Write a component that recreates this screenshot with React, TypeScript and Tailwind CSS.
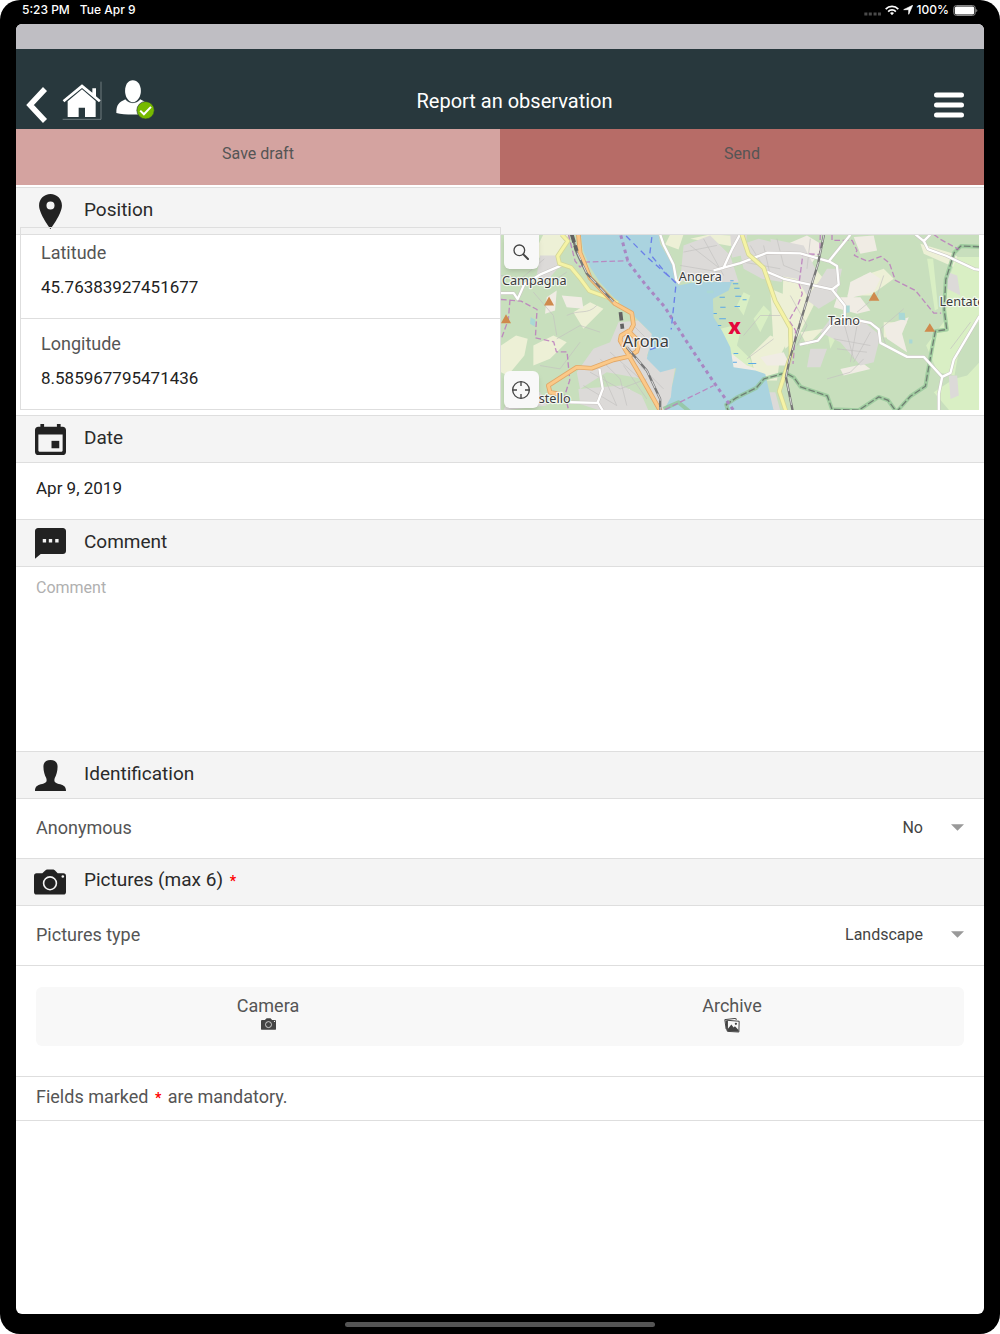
import { useState } from 'react';
import type { ReactNode } from 'react';

const ACCENT_ICON = '#222222';

const BackIcon = () => (
    <svg viewBox="0 0 22 38" className="w-[22px] h-[38px]" fill="none" stroke="#fff" strokeWidth="5.5">
        <path d="M19 3 4 19l15 16" strokeLinejoin="miter" />
    </svg>
);

const HomeIcon = () => (
    <svg viewBox="0 0 120 120" className="w-10 h-10">
        <path d="M117 2v113H2" fill="none" stroke="#7d898c" strokeWidth="2.5" />
        <path d="M60 10 2 58l5 6 53-43 51 43 5-6-14-12V22H91v13z" fill="#fff" />
        <path d="M60 25 17 61v47h33V80h19v28h32V60z" fill="#fff" />
    </svg>
);

const UserIcon = () => (
    <svg viewBox="0 0 116 116" className="w-[39px] h-[39px]">
        <path d="M50 1c14 0 24 14 24 31S64 66 50 66 27 49 27 32 36 1 50 1z" fill="#fff" />
        <path d="M1 98C1 72 8 67 28 57c12 14 32 14 44 0 20 10 27 14 27 41-25 6-73 6-98 0z" fill="#fff" />
        <path d="M28 57c12 14 32 14 44 0" fill="none" stroke="#28383d" strokeWidth="1.5" />
        <circle cx="88" cy="90" r="26" fill="#76b900" stroke="#28383d" strokeWidth="2" />
        <path d="m72 91 11 11 21-22" fill="none" stroke="#fff" strokeWidth="6" />
    </svg>
);

const MenuIcon = () => (
    <svg viewBox="0 0 30 26" className="w-[30px] h-[26px]" stroke="#fff" strokeWidth="5" strokeLinecap="round">
        <path d="M2.5 3h25M2.5 13h25M2.5 23h25" />
    </svg>
);

const PinIcon = () => (
    <svg viewBox="0 0 68 104" className="w-[23px] h-[35px]">
        <path
            d="M34 0C15 0 0 15 0 34c0 25 34 70 34 70s34-45 34-70C68 15 53 0 34 0zm0 46a12 12 0 1 1 0-24 12 12 0 0 1 0 24z"
            fill={ACCENT_ICON}
        />
    </svg>
);

const CalendarIcon = () => (
    <svg viewBox="0 0 92 92" className="w-[31px] h-[31px]" fill={ACCENT_ICON}>
        <path d="M10 8h6V0h11v8h38V0h11v8h6c6 0 10 4 10 10v64c0 6-4 10-10 10H10C4 92 0 88 0 82V18C0 12 4 8 10 8zm0 23v48c0 2 1 3 3 3h66c2 0 3-1 3-3V31z" fillRule="evenodd" />
        <path d="M49 50h23v22H49z" />
    </svg>
);

const CommentIcon = () => (
    <svg viewBox="0 0 92 92" className="w-[31px] h-[31px]">
        <path d="M9 0h74c5 0 9 4 9 9v59c0 5-4 9-9 9H17L0 91V9c0-5 4-9 9-9z" fill={ACCENT_ICON} />
        <path d="M23 33h10v10H23zM41 33h10v10H41zM60 33h10v10H60z" fill="#f4f4f4" />
    </svg>
);

const PersonIcon = () => (
    <svg viewBox="0 0 92 92" className="w-[31px] h-[31px]">
        <path
            d="M46 0c14 0 21 8 21 20 0 14-4 25-8 33-2 5-2 9 0 12 3 4 10 5 16 7 12 4 17 8 17 20H0c0-12 5-16 17-20 6-2 13-3 16-7 2-3 2-7 0-12-4-8-8-19-8-33C25 8 32 0 46 0z"
            fill={ACCENT_ICON}
        />
    </svg>
);

const CameraIcon = ({ className, color = ACCENT_ICON }: { className: string; color?: string }) => (
    <svg viewBox="0 0 100 78" className={className}>
        <path d="M8 12h18L36 2c2-1 3-2 6-2h17c3 0 4 1 6 2l9 10h18c5 0 8 3 8 8v50c0 5-3 8-8 8H8c-5 0-8-3-8-8V20c0-5 3-8 8-8z" fill={color} />
        <circle cx="50" cy="43" r="20" fill="none" stroke="#f6f6f6" strokeWidth="5" />
        <circle cx="90" cy="22" r="4" fill="#f6f6f6" />
    </svg>
);

const PhotosIcon = () => (
    <svg viewBox="0 0 48 46" className="w-4 h-[15px]">
        <path d="M6 34 2 5l34-4 1 5" fill="none" stroke="#444" strokeWidth="3" />
        <path d="M4 8l6-1v32l-3-1z" fill="#444" />
        <path d="M10 7l36 3-1 33-35-2z" fill="#f8f8f8" stroke="#444" strokeWidth="3" />
        <path d="M11 40V34l11-14 7 9 4-4 11 12v5z" fill="#444" />
        <circle cx="36" cy="18" r="3.5" fill="#444" />
    </svg>
);

const SearchIcon = () => (
    <svg viewBox="0 0 48 48" className="w-4 h-4" fill="none" stroke="#444">
        <circle cx="19" cy="19" r="16" strokeWidth="4" />
        <path d="m31 31 14 14" strokeWidth="6" strokeLinecap="round" />
    </svg>
);

const LocateIcon = () => (
    <svg viewBox="0 0 54 54" className="w-[18px] h-[18px]" fill="none" stroke="#444" strokeWidth="4">
        <circle cx="27" cy="27" r="25" />
        <path d="M27 2v13M27 39v13M2 27h13M39 27h13" />
    </svg>
);

const MapDrawing = () => (
    <svg
        viewBox="33 27 1434 528"
        preserveAspectRatio="xMidYMid slice"
        className="block w-full h-full"
        role="img"
        aria-label="Map of Arona and Angera"
        fill="none"
        strokeLinejoin="round"
    >
        <path d="M33 27h1434v528H33z" fill="#c8dfbd" />

        {/* fields and open land */}
        <g fill="#edf0d6">
            <path d="M160 27h75l-20 55-40 30-45-25zM33 360l45-30 35 10-10 50-50 60-20-10zM90 45l50-10 10 40-40 20zM130 360l60-30 40 20-50 50-50 20zM250 260l50-30 40 20-60 60z" />
            <path d="M540 27h40l-15 45-40-15zM840 190l50 20 20 60-20 80-40 10z" />
            <path d="M880 120l70-20 50 60-30 80-50 100-35 30-10-90zM1070 210l50-60 60-20 30 30-70 50zM1180 290l70 0-30 50-40-5zM1290 55l100 30 60 50-60-10-90-40z" />
            <path d="M780 390l60-60 50 20-20 40-10 75h-60zM600 40l60-13 90 5-30 30zM930 320l70-10-50 50z" />
        </g>
        <g fill="#d9efc4">
            <path d="M1400 95h67v190l-60 80-15 85-50-10-35-80 60-80-5-90zM1330 500l60-40 40-10 37-40v145h-90z" />
            <path d="M690 310l40-10 20 20-10 40 40 40 10 35-60-15-20-60zM1310 100l18 0 15 150-10 5z" />
            <path d="M740 240l20-40 20 10-20 60zM790 280l30-40 20 20-30 60zM1010 310l30 20-20 40z" />
        </g>
        <g fill="#f0ece4">
            <path d="M1080 170l60-30 30 20-20 40-80 20zM1040 215l70 0 30 40-40 10-70-20zM1180 300l75-25-20 50 15 55-60-40zM1050 430l70-15 20 15-80 20zM880 60l70-30 50 30-40 60-80-10zM1090 35l60-5 10 45-50 10z" />
            <path d="M170 215l30-20-5 60-30 10zM215 210l60 5 5 35-50-5zM330 490l90 0-10 65h-80zM810 395l70-15 20 40-70 0zM725 385l45 35 30 10-20 20-60-10z" />
        </g>

        {/* built-up areas */}
        <g fill="#dcdad8">
            <path d="M385 290l60-5 50 50-25 55 40 40 45-5-10 60 5 70h-45l-45-95-110-20-80 50-10-50 50-70 50-20z" />
            <path d="M265 490l130-10 60 30 20 45H330l-60-20zM150 90l50 0 10 30-50 60-20-30z" />
            <path d="M580 60l80-30 60 60 25 80-60 0-70-10-45 8zM720 27h50l-5 60-40 10zM745 60l60-20 80 20-10 110-60-10-55-30z" />
            <path d="M840 40l100 20 40 80-30 70-30-50-60-10zM1010 130l45 0-20 90-50 30-40-30 40-50zM1020 280l90 0 60 50-20 80-40 10-60-70-60-30zM960 370l50 0-20 55-40 0z" />
            <path d="M1370 140l30 10 10 60-40-20zM1375 450l25 0 5 60-25 10zM70 480l80 20 20 40-130 15zM830 500l25 0 15 55h-20z" />
        </g>
        <g stroke="#c3c1c0" strokeWidth="2">
            <path d="M300 440l90 50 80-30M330 400l60 60 20 80M400 420l70 100M430 300l60 60M340 450l40 90M280 480l100 60M360 380l90 80M450 420l70 70M600 60l90 70M570 120l120 20M640 40l60 110M580 80l100-20M760 110l110 20M780 60l50 80M820 60l20 90M1030 340l110 20M1060 290l30 110M1100 300l-20 110M1140 320l-50 90M1040 370l90 10" />
            <path d="M170 180l60-40M230 270c40-20 60 0 90-30M33 150l60 10 70-60M130 200l60 70 10 60M200 340l70-40 60 20M150 420l60 10 60-80M860 40l20 80 50 20M960 40l-10 90M900 210l50 90-30 60M1010 460l70-20 40-40M1240 250l-70 60 20 60M1440 290l-60 80M1180 150l-20 60-60 50M760 330l50-60 60 0M770 400l80-60" />
        </g>

        {/* lake */}
        <path
            d="M272 27l8 50 20 48 28 44 42 46 60 55 55 55-7 40-8 35 40 40 48-13-13 58-3 30-22 40h330l-25-110-30-10-65-10-10-60-25-50-25-40-2-55 47-25 10-25-65 0-55 2-40 8-15-55-40-70-5-28z"
            fill="#aad3df"
        />
        <path d="M650 195h20v8h-20zM122 275l14 8-2 20-14-8zM1225 262l18 0 2 22-20-2zM1060 240l18 0v20l-18 5zM1256 342h10v12h-10z" fill="#aad8d5" />
        <g stroke="#5aa9e6" strokeWidth="3">
            <path d="M720 166h10M728 175h16M688 215h16M735 212h18M690 245h16M733 243h16M670 264h10M687 280h20M732 188h16M730 384h14M728 410h12M757 223h12M774 414h24M683 300h10" />
        </g>

        {/* region borders */}
        <g stroke="#8fc494" strokeWidth="12" opacity="0.7">
            <path d="M1467 64l-56-2-20 20-25 80-5 90 8 60-34 5-10 50-15 85-5 30-45 30-42 47-25-35-28-10-60 40-80-3-14-40-45-15-35-12-20-28-25-14-65 18-23 27-60 30-30 20 15 50" />
            <path d="M520 550l45-20 35 30" />
        </g>
        <path
            d="M1467 64l-56-2-20 20-25 80-5 90 8 60-34 5-10 50-15 85-5 30-45 30-42 47-25-35-28-10-60 40-80-3-14-40-45-15-35-12-20-28-25-14-65 18-23 27-60 30-30 20 15 50"
            stroke="#708073"
            strokeWidth="4"
            strokeDasharray="20 7"
        />
        <g stroke="#bb7bbd" strokeWidth="4" strokeDasharray="17 8" opacity="0.85">
            <path d="M33 222l60 5 48 25-5 85 55 12 8 30h32l8 85-15 45 12 45M60 222l-5 60-20 55M235 27l20 80 15 18 15-15 130-4M525 552l145-72" />
            <path d="M1025 27v18h60l15 30-8 15 40 18 40-15 25 20 18 52 60 30 55 68h22M1330 27l20 15 55 30M990 27l-2 60-50-2-12 90 10 30-12 30-28 50 20 30 -8 100" />
        </g>
        <path d="M392 30l22 80 50 65 60 70 60 95 80 120 70 100" stroke="#a887c3" strokeWidth="9" strokeDasharray="11 11" />
        <g stroke="#6b80e8" strokeWidth="4" strokeDasharray="18 13">
            <path d="M408 32l65 65 85 75-15 140M485 35l-6 50 50 60 28 28M480 372l45-15" />
        </g>

        {/* minor roads */}
        <g stroke="#c9c5c2" strokeWidth="10">
            <path d="M33 203h38l12 18 20-45 50-30 70-30M328 430l10 60-15 40 15 25M240 530l85 2M510 27l10 30 30 60 8 45 10 12M670 135l30-8 25-55 25-46M670 135l80-22 80-31 100 2 85 24 65-80M820 135l60 25 145 32 20-15-5-55-25-15M1025 192l38 48v35l-35 15-45 55-55 12M1090 282l50 10 25 20 5 40 80 42h50l55 60 25-12 10-40 77-130M1355 455l-10 50v50M1275 27l25 20 12 24 55 20 85 40 15 2M1300 47l20-20" />
        </g>
        <g stroke="#fff" strokeWidth="7">
            <path d="M33 203h38l12 18 20-45 50-30 70-30M328 430l10 60-15 40 15 25M240 530l85 2M510 27l10 30 30 60 8 45 10 12M670 135l30-8 25-55 25-46M670 135l80-22 80-31 100 2 85 24 65-80M820 135l60 25 145 32 20-15-5-55-25-15M1025 192l38 48v35l-35 15-45 55-55 12M1090 282l50 10 25 20 5 40 80 42h50l55 60 25-12 10-40 77-130M1355 455l-10 50v50M1275 27l25 20 12 24 55 20 85 40 15 2M1300 47l20-20" />
        </g>

        {/* main roads */}
        <g stroke="#d3d698" strokeWidth="14">
            <path d="M215 27l18 20-30 45 5 22 35 12 25 30 30 40 60 22 25 15M755 27l20 60 45 40 35 100 45 80 2 80-35 110 20 60" />
        </g>
        <g stroke="#f5f3a5" strokeWidth="9">
            <path d="M215 27l18 20-30 45 5 22 35 12 25 30 30 40 60 22 25 15M755 27l20 60 45 40 35 100 45 80 2 80-35 110 20 60" />
        </g>
        <g stroke="#e2a868" strokeWidth="14">
            <path d="M265 27l5 55 30 75 75 78 50 28 5 35-12 22 30 30-8 28-25 15-45 10-65 25-45-3-85 55 5 20 25 5M418 315l-25 15-3 15 20 35 35 60 65 115" />
        </g>
        <g stroke="#fbc989" strokeWidth="9">
            <path d="M265 27l5 55 30 75 75 78 50 28 5 35-12 22 30 30-8 28-25 15-45 10-65 25-45-3-85 55 5 20 25 5M418 315l-25 15-3 15 20 35 35 60 65 115" />
        </g>

        {/* railways */}
        <g stroke="#777" strokeWidth="7">
            <path d="M245 27l15 55 30 62 80 85M410 365l60 70 40 85v35M1001 27l-18 88-50 165-36 125-10 50 20 100" />
        </g>
        <path d="M262 82l28 62 80 85M410 365l60 70 40 85v35M1001 27l-18 88-50 165-36 125-10 50 20 100" stroke="#d7d7d7" strokeWidth="3" strokeDasharray="24 18" />
        <path d="M391 260l6 50M245 27l15 50" stroke="#626262" strokeWidth="11" strokeDasharray="25 10" />

        {/* peaks */}
        <g fill="#cf8a4d">
            <path d="M177 213l15 27h-30zM48 266l15 27H33zM1151 199l16 27h-32zM1318 293l16 26h-32z" />
        </g>

        {/* place names */}
        <g
            fontFamily='"Noto Sans", sans-serif'
            fill="#3c3c3c"
            stroke="#ffffff"
            strokeOpacity="0.75"
            strokeWidth="7"
            paintOrder="stroke"
            fontSize="38"
        >
            <text x="36" y="178">Campagna</text>
            <text x="566" y="166">Angera</text>
            <text x="398" y="363" fontSize="49">Arona</text>
            <text x="1013" y="300">Taino</text>
            <text x="1347" y="242">Lentate</text>
            <text x="146" y="532">stello</text>
        </g>
        <text x="714" y="325" fontFamily='"Noto Sans", sans-serif' fontSize="63" fontWeight="800" fill="#e4093c">x</text>
    </svg>
);

const StatusBar = () => (
    <div className="flex h-6 items-center justify-between pl-[6px] pr-[6px] pb-1 font-[Inter,sans-serif] text-[12px] font-medium text-white">
        <div className="flex gap-[10px]">
            <span>5:23 PM</span>
            <span>Tue Apr 9</span>
        </div>
        <div className="flex items-center gap-1">
            <svg viewBox="0 0 50 34" className="w-[17px] h-3" fill="#4a4a4a">
                <path d="M1 24h9v9H1zM14 24h9v9h-9zM28 24h9v9h-9zM41 24h9v9h-9z" />
            </svg>
            <svg viewBox="0 0 40 30" className="w-[14px] h-[11px]" fill="none" stroke="#fff" strokeWidth="5">
                <path d="M2 11C12 1 28 1 38 11M9 18c6-6 16-6 22 0" />
                <path d="m20 28-5-6c3-3 7-3 10 0z" fill="#fff" strokeWidth="1" />
            </svg>
            <svg viewBox="0 0 28 28" className="w-[10px] h-[10px]" fill="#fff" stroke="#fff" strokeWidth="2" strokeLinejoin="round">
                <path d="M27 1 16 26V13L2 13z" />
            </svg>
            <span>100%</span>
            <svg viewBox="0 0 76 34" className="w-[25px] h-[11px]">
                <rect x="1.5" y="1.5" width="67" height="31" rx="9" fill="none" stroke="#8a8a8a" strokeWidth="3" />
                <rect x="5" y="5" width="60" height="24" rx="5" fill="#fff" />
                <path d="M71 12c5 2 5 8 0 10z" fill="#8a8a8a" />
            </svg>
        </div>
    </div>
);

const SectionHeader = ({ icon, children }: { icon: ReactNode; children: ReactNode }) => (
    <div className="flex h-12 items-center border-y border-[#dedede] bg-[#f4f4f4] pl-[18px]">
        <span className="flex w-8 shrink-0 justify-center">{icon}</span>
        <h2 className="ml-[18px] pb-[3px] text-[19px] leading-6 text-[#2a2a2a]">{children}</h2>
    </div>
);

const Required = () => <span className="px-[2px] text-[14px] font-bold text-[#f00]">*</span>;

const CoordinateField = ({ id, label, defaultValue }: { id: string; label: string; defaultValue: string }) => (
    <div className="flex flex-1 flex-col gap-2 pl-5 pt-[13px]">
        <label htmlFor={id} className="text-[18px] leading-6 text-[#555]">{label}</label>
        <input
            id={id}
            defaultValue={defaultValue}
            inputMode="decimal"
            className="h-7 w-full bg-transparent text-[17px] text-[#222] outline-none"
        />
    </div>
);

interface SelectRowProps {
    id: string;
    label: string;
    options: string[];
    value: string;
    onChange: (value: string) => void;
}

const SelectRow = ({ id, label, options, value, onChange }: SelectRowProps) => (
    <div className="flex h-[59px] items-center justify-between px-5 pb-[2px]">
        <label htmlFor={id} className="text-[18px] text-[#555]">{label}</label>
        <div className="flex items-center gap-7">
            <select
                id={id}
                value={value}
                onChange={(e) => onChange(e.target.value)}
                className="w-40 appearance-none bg-transparent text-[16px] text-[#444] outline-none [text-align-last:right]"
            >
                {options.map((option) => (
                    <option key={option}>{option}</option>
                ))}
            </select>
            <svg viewBox="0 0 12 6" className="pointer-events-none w-[13px] h-[7px]" fill="#999">
                <path d="M0 0h12L6 6z" />
            </svg>
        </div>
    </div>
);

export default function App() {
    const [anonymous, setAnonymous] = useState('No');
    const [pictureType, setPictureType] = useState('Landscape');

    return (
        <div className="flex min-h-screen flex-col rounded-[20px] bg-black px-4 font-[Roboto,sans-serif]">
            <StatusBar />
            <div className="flex flex-1 flex-col overflow-hidden rounded-md bg-white">
                <div className="h-[25px] bg-[#bfbec3]" />
                <header className="flex h-20 items-center bg-[#28383d] pt-6">
                    <div className="flex items-center gap-[14px] pl-[10px]">
                        <button type="button" aria-label="Back" className="mt-2"><BackIcon /></button>
                        <a href="#home" aria-label="Home"><HomeIcon /></a>
                        <a href="#account" aria-label="Account" className="pb-1"><UserIcon /></a>
                    </div>
                    <h1 className="flex-1 text-center text-[20px] text-white">Report an observation</h1>
                    <div className="flex w-[110px] justify-end pr-5">
                        <button type="button" aria-label="Menu" className="mt-2"><MenuIcon /></button>
                    </div>
                </header>

                <div className="flex h-14">
                    <button type="button" className="flex-1 bg-[#d4a3a0] pb-[6px] text-[16px] text-[#555]">Save draft</button>
                    <button type="button" className="flex-1 bg-[#b76c67] pb-[6px] text-[16px] text-[#555]">Send</button>
                </div>

                <form className="pt-[2px]" onSubmit={(e) => e.preventDefault()}>
                    <section>
                        <SectionHeader icon={<PinIcon />}>Position</SectionHeader>
                        <div className="flex h-[180px] pl-1 pr-[5px] pb-[5px]">
                            {/* the coordinate box overlaps the lower edge of the section header */}
                            <div className="-mt-2 flex flex-1 flex-col divide-y divide-[#dedede] border border-[#dedede]">
                                <CoordinateField id="latitude" label="Latitude" defaultValue="45.76383927451677" />
                                <CoordinateField id="longitude" label="Longitude" defaultValue="8.585967795471436" />
                            </div>
                            <div className="relative flex-1 overflow-hidden">
                                <MapDrawing />
                                <button
                                    type="button"
                                    aria-label="Search on map"
                                    className="absolute left-[3px] top-0 flex h-[34px] w-[35px] items-center justify-center rounded-b-md bg-[#f8f8f8] shadow-md"
                                >
                                    <SearchIcon />
                                </button>
                                <button
                                    type="button"
                                    aria-label="Use my location"
                                    className="absolute bottom-[2px] left-[3px] flex h-[37px] w-[35px] items-center justify-center rounded-md bg-[#f8f8f8] shadow-md"
                                >
                                    <LocateIcon />
                                </button>
                            </div>
                        </div>
                    </section>

                    <section>
                        <SectionHeader icon={<CalendarIcon />}>Date</SectionHeader>
                        <input
                            aria-label="Date"
                            defaultValue="Apr 9, 2019"
                            className="block h-14 w-full px-5 pb-[6px] text-[17px] text-[#222] outline-none"
                        />
                    </section>

                    <section>
                        <SectionHeader icon={<CommentIcon />}>Comment</SectionHeader>
                        <textarea
                            aria-label="Comment"
                            placeholder="Comment"
                            className="block h-[184px] w-full resize-none px-5 py-[9px] text-[16px] leading-6 text-[#222] outline-none placeholder:text-[#b0b0b0]"
                        />
                    </section>

                    <section>
                        <SectionHeader icon={<PersonIcon />}>Identification</SectionHeader>
                        <SelectRow
                            id="anonymous"
                            label="Anonymous"
                            options={['No', 'Yes']}
                            value={anonymous}
                            onChange={setAnonymous}
                        />
                    </section>

                    <section>
                        <SectionHeader icon={<CameraIcon className="w-[33px] h-[26px]" />}>
                            Pictures (max 6) <Required />
                        </SectionHeader>
                        <SelectRow
                            id="picture-type"
                            label="Pictures type"
                            options={['Landscape', 'Species']}
                            value={pictureType}
                            onChange={setPictureType}
                        />
                        <div className="border-y border-[#dedede] px-5 pt-[21px] pb-[30px]">
                            <div className="flex h-[59px] rounded-md bg-[#f8f8f8]">
                                <button type="button" className="flex flex-1 flex-col items-center pt-[7px] text-[18px] leading-6 text-[#555]">
                                    Camera
                                    <CameraIcon className="w-[15px] h-3" color="#444" />
                                </button>
                                <button type="button" className="flex flex-1 flex-col items-center pt-[7px] text-[18px] leading-6 text-[#555]">
                                    Archive
                                    <PhotosIcon />
                                </button>
                            </div>
                        </div>
                        <p className="border-b border-[#dedede] px-5 pt-2 pb-[10px] text-[18px] leading-6 text-[#555]">
                            Fields marked <Required /> are mandatory.
                        </p>
                    </section>
                </form>
            </div>
            <div className="flex h-5 items-center justify-center">
                <div className="h-[5px] w-[32%] rounded-full bg-[#555]" />
            </div>
        </div>
    );
}
